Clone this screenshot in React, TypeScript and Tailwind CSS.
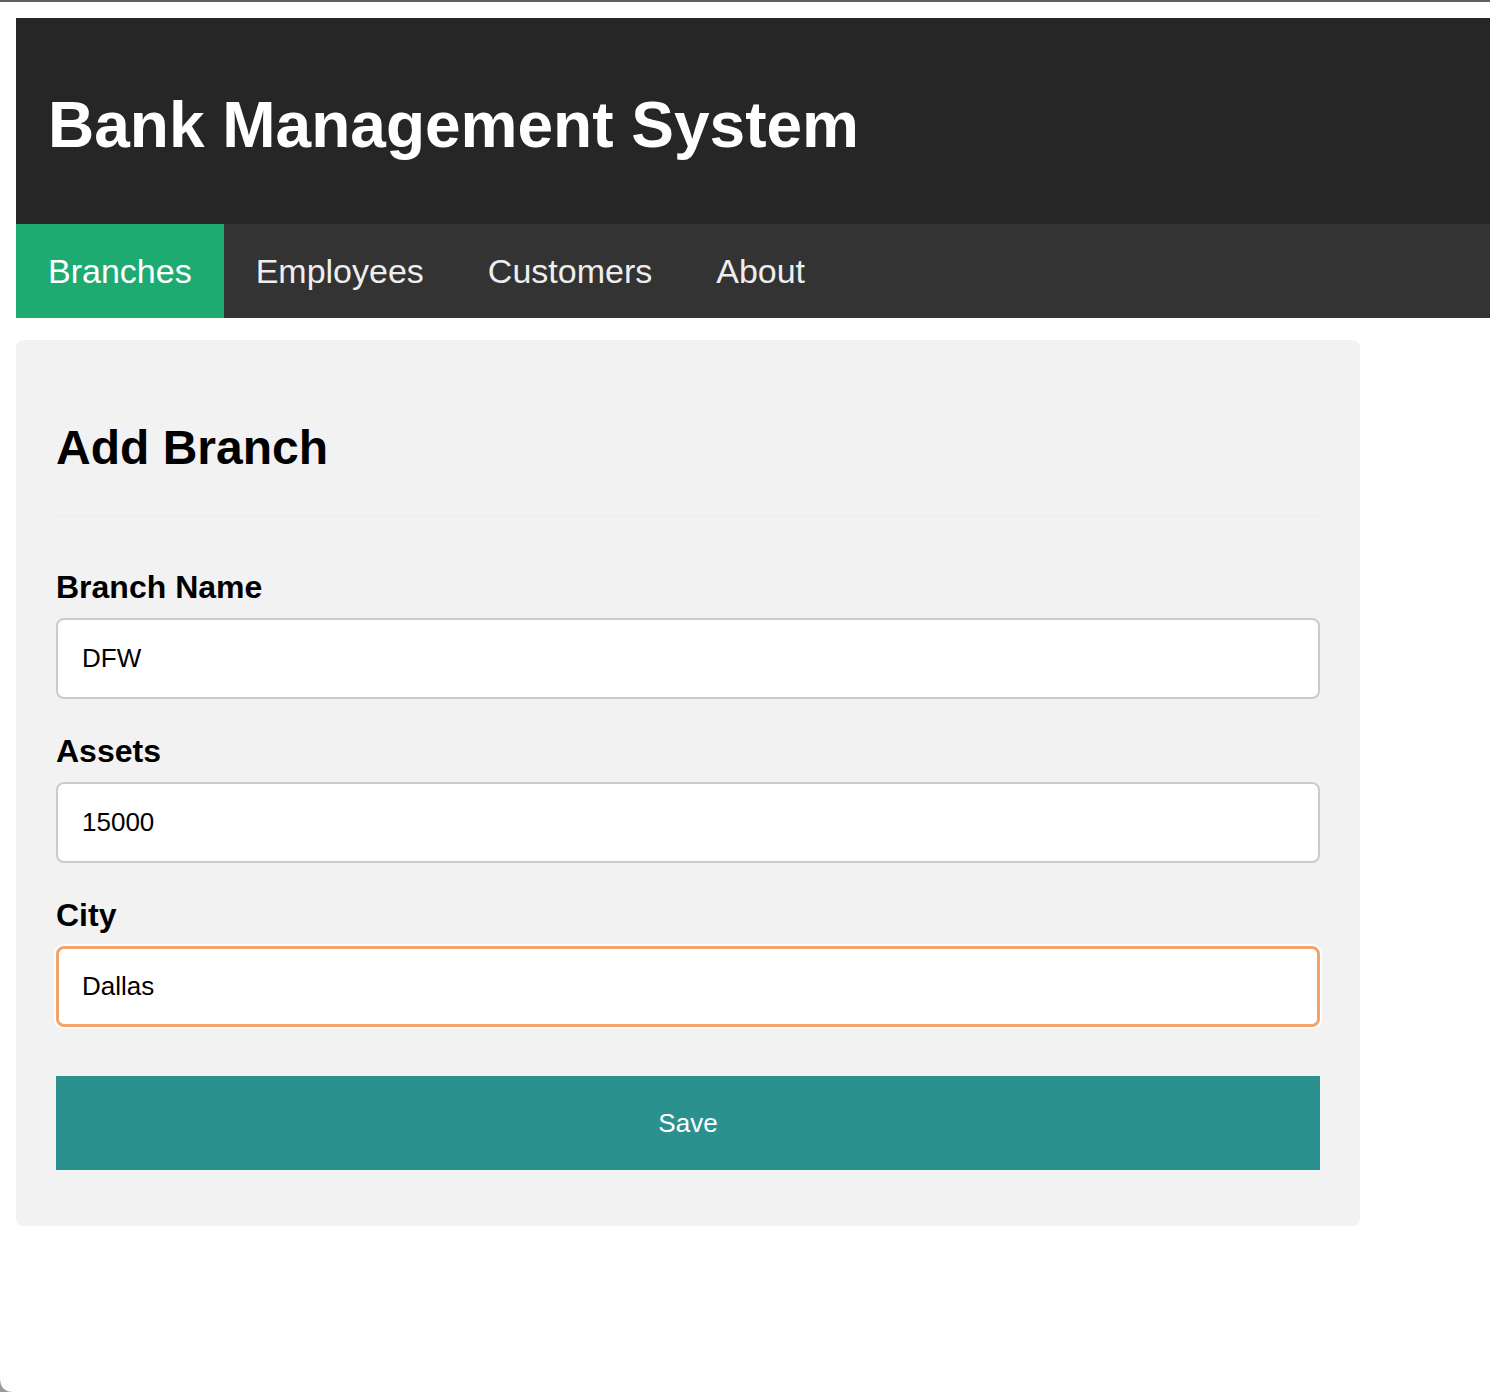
import { useState } from "react";

const tabs = ["Branches", "Employees", "Customers", "About"];

function Field({ label, value, focused }: { label: string; value: string; focused?: boolean }) {
  return (
    <div className="flex flex-col">
      <label className="text-[32px] font-bold leading-[37px] text-black">{label}</label>
      <input
        defaultValue={value}
        className={
          focused
            ? "mt-3 h-[81px] w-full rounded-lg border-[3px] border-[#f2a36e] bg-white px-[23px] text-[26px] text-black outline-none ring-2 ring-white"
            : "mt-3 h-[81px] w-full rounded-lg border-2 border-[#cccccc] bg-white px-6 text-[26px] text-black outline-none"
        }
      />
    </div>
  );
}

export default function App() {
  const [active] = useState("Branches");

  return (
    <div className="relative min-h-[1392px] bg-white font-['Liberation_Sans',Arial,sans-serif]">
      <div className="h-[2px] bg-[#5f5f5f]" />
      <div className="ml-4 mt-4">
        <header className="h-[206px] bg-[#262626] pl-8 pt-[70px]">
          <h1 className="text-[64px] font-bold leading-[74px] text-white">Bank Management System</h1>
        </header>
        <nav className="flex h-[94px] bg-[#333333]">
          {tabs.map((t) => (
            <a
              key={t}
              className={
                t === active
                  ? "flex items-center bg-[#1eab72] px-8 text-[34px] text-white"
                  : "flex items-center px-8 text-[34px] text-[#eeeeee]"
              }
            >
              {t}
            </a>
          ))}
        </nav>
      </div>

      <div className="ml-4 mt-[22px] w-[1344px] rounded-lg bg-[#f2f2f2] px-10 pb-14 pt-20">
        <h2 className="text-[48px] font-bold leading-[55px] text-black">Add Branch</h2>
        <div className="mt-10 border-b border-[#ececec]" />
        <div className="mt-[53px] flex flex-col gap-[34px]">
          <Field label="Branch Name" value="DFW" />
          <Field label="Assets" value="15000" />
          <Field label="City" value="Dallas" focused />
        </div>
        <button className="mt-[49px] h-[94px] w-full bg-[#2a918f] text-[26px] text-white">Save</button>
      </div>

      {/* window corner */}
      <svg className="absolute bottom-0 left-0" width="14" height="14" viewBox="0 0 14 14">
        <path d="M0 0 Q0 14 14 14 L0 14 Z" fill="#9a9a9a" />
      </svg>
    </div>
  );
}
